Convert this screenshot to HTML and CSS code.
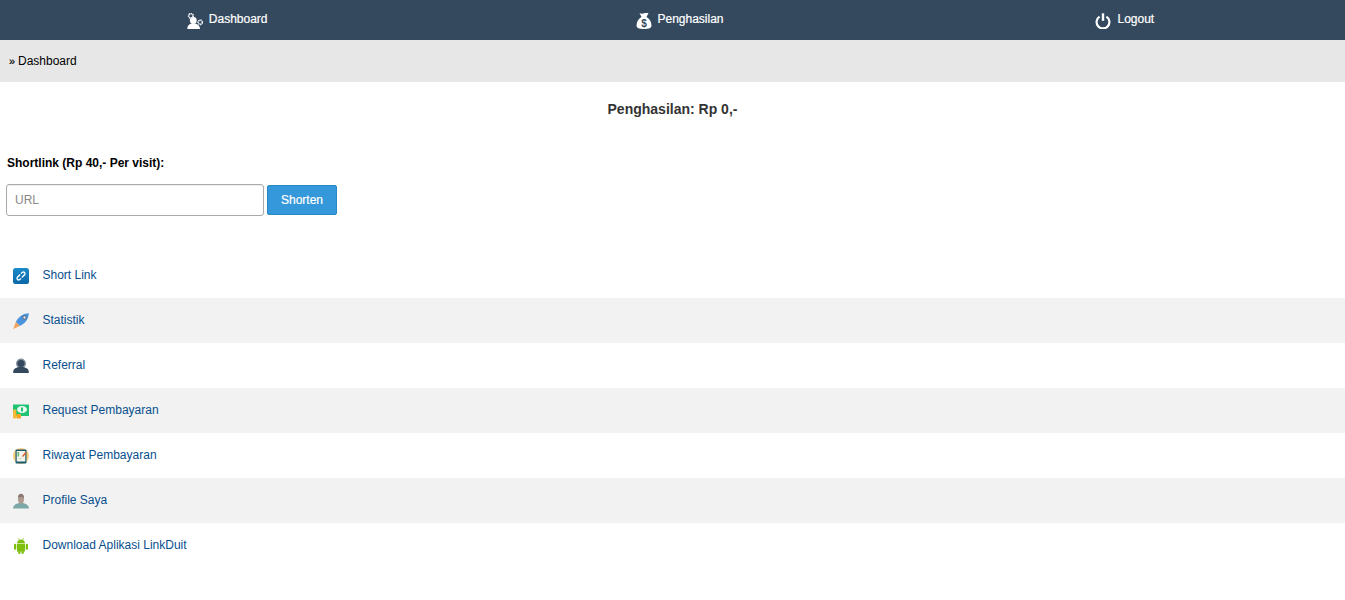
FILE: index.html
```html
<!DOCTYPE html>
<html lang="id">
<head>
<meta charset="utf-8">
<title>Dashboard</title>
<link rel="stylesheet" href="styles.css">
</head>
<body>
<nav class="topnav">
  <a class="topnav-item item-dash" href="#">
    <svg class="nav-icon" viewBox="0 0 16 16"><circle cx="6.300" cy="7.500" r="3.400" fill="#fff"/><path d="M.3 16c0-3.500 2-5.500 6-5.500s6.700 2 6.700 5.500z" fill="#fff"/><circle cx="3.900" cy="2.900" r="2.200" fill="none" stroke="#f0f2f4" stroke-width="1.800" stroke-dasharray="1.300 .5"/><circle cx="13.200" cy="9.300" r="2.100" fill="none" stroke="#f0f2f4" stroke-width="1.700" stroke-dasharray="1.300 .5"/></svg>
    <span>Dashboard</span>
  </a>
  <a class="topnav-item item-money" href="#">
    <svg class="nav-icon" viewBox="0 0 16 16"><path d="M3.500 0c1.200.6 2.800.9 4.500.3 1.700-.6 3.200-.6 4.500-.3L10.500 4c3 1.800 5 5 5 8.500 0 2.500-2.500 3.500-7.500 3.500S.500 15 .500 12.500c0-3.500 2-6.700 5-8.500z" fill="#fff"/><text x="8" y="13.700" class="dollar">$</text></svg>
    <span>Penghasilan</span>
  </a>
  <a class="topnav-item item-logout" href="#">
    <svg class="nav-icon" viewBox="0 0 16 16"><path d="M4.600 3.600a6.400 6.400 0 1 0 6.800 0" fill="none" stroke="#fff" stroke-width="2.200"/><path d="M8 .3v7.500" stroke="#fff" stroke-width="2.400"/></svg>
    <span>Logout</span>
  </a>
</nav>

<div class="crumb"><span class="raquo">»</span><span>Dashboard</span></div>

<h1 class="earnings">Penghasilan: Rp 0,-</h1>

<section class="shortlink">
  <p class="shortlink-label">Shortlink (Rp 40,- Per visit):</p>
  <form class="shortlink-form">
    <input class="url-input" type="text" placeholder="URL">
    <button class="shorten-btn" type="button">Shorten</button>
  </form>
</section>

<ul class="menu">
  <li class="menu-row"><a href="#">
    <svg class="menu-icon" viewBox="0 0 16 16"><defs><linearGradient id="lg" x1="0" y1="0" x2="0" y2="1"><stop offset="0" stop-color="#1b8ccb"/><stop offset="1" stop-color="#0a67a8"/></linearGradient></defs><rect width="16" height="16" rx="2.500" fill="url(#lg)"/><path d="M8 5.500l1.500-1.300a1.700 1.700 0 0 1 2.300 2.300L8.800 9.500" fill="none" stroke="#fff" stroke-width="1.300"/><path d="M8 10.500l-1.500 1.300a1.700 1.700 0 0 1-2.300-2.300L7.200 6.500" fill="none" stroke="#fff" stroke-width="1.300"/></svg>
    Short Link</a></li>
  <li class="menu-row"><a href="#">
    <svg class="menu-icon" viewBox="0 0 16 16"><path d="M15.800.200C11 .200 5.500 3 2.800 9l4 4C13 10 15.800 5 15.800.200z" fill="#4a94de"/><circle cx="11.500" cy="4.500" r="1.700" fill="#dde" stroke="#555" stroke-width=".8"/><path d="M2.800 9l4 4-6.600 3z" fill="#f2a35c"/></svg>
    Statistik</a></li>
  <li class="menu-row"><a href="#">
    <svg class="menu-icon" viewBox="0 0 16 16"><ellipse cx="8" cy="5.500" rx="5" ry="5" fill="#34495e" opacity=".6"/><circle cx="8" cy="5.500" r="3.600" fill="#34495e"/><path d="M.200 14c0-3.500 3-5 7.800-5s7.800 1.500 7.800 5v1H.200z" fill="#34495e"/></svg>
    Referral</a></li>
  <li class="menu-row"><a href="#">
    <svg class="menu-icon" viewBox="0 0 16 16"><rect y="1.500" width="16" height="11.500" fill="#20c374"/><ellipse cx="9" cy="6.500" rx="5" ry="3.500" fill="#e8fbf0"/><rect x="8" y="4.500" width="2" height="4" fill="#20c374"/><rect y="6.500" width="3.300" height="9" rx="1" fill="#f7bc34"/><rect x="3.300" y="11" width="4.700" height="4.500" rx="1" fill="#f5a623"/></svg>
    Request Pembayaran</a></li>
  <li class="menu-row"><a href="#">
    <svg class="menu-icon" viewBox="0 0 16 16"><circle cx="8" cy="8" r="8" fill="#f9cf7f"/><rect x="2.500" y="1.500" width="11" height="14" rx="1" fill="#1c5a6e"/><rect x="3.700" y="3" width="8.600" height="10.500" fill="#f2f3ea"/><rect x="4.500" y="4" width="1.600" height="4.500" fill="#6dbb6d"/><path d="M9.500 8.500L13 4.500" stroke="#e4572e" stroke-width="1.300"/><path d="M6.500 10.500h2" stroke="#b8d0b0"/></svg>
    Riwayat Pembayaran</a></li>
  <li class="menu-row"><a href="#">
    <svg class="menu-icon" viewBox="0 0 16 16"><path d="M0 15.500c.5-4 4-5.500 8-5.500s7.500 1.500 8 5.500z" fill="#7ba7a7"/><ellipse cx="8" cy="6" rx="3" ry="4.700" fill="#b09b90"/><path d="M5 5C4.800 2 6.500.8 8 .8s3.200 1.200 3 4.200C9.500 3.600 6.500 3.600 5 5z" fill="#8b7a71"/></svg>
    Profile Saya</a></li>
  <li class="menu-row"><a href="#">
    <svg class="menu-icon" viewBox="0 0 16 16"><path d="M4 5.200C4 3 6 1.500 8 1.500s4 1.500 4 3.700z" fill="#7fbf10"/><path d="M5.500 .2l1 2M10.500 .2l-1 2" stroke="#7fbf10" stroke-width=".7"/><path d="M4 5.800h8v7.700H4z" fill="#7fbf10"/><rect x="1" y="5.800" width="2.300" height="6" rx="1.100" fill="#7fbf10"/><rect x="12.700" y="5.800" width="2.300" height="6" rx="1.100" fill="#7fbf10"/><rect x="5.200" y="12" width="2.300" height="4" rx="1.100" fill="#7fbf10"/><rect x="8.500" y="12" width="2.300" height="4" rx="1.100" fill="#7fbf10"/></svg>
    Download Aplikasi LinkDuit</a></li>
</ul>
</body>
</html>
```
FILE: styles.css
```css
* { box-sizing: border-box; }
html, body { margin: 0; padding: 0; }
body {
  background: #fff;
  color: #333;
  font-family: Arial, "Liberation Sans", sans-serif;
  font-size: 12px;
  overflow: hidden;
}
.topnav {
  display: grid;
  grid-template-columns: repeat(3, 1fr);
  height: 40px;
  background: #34495e;
}
.topnav-item {
  display: flex;
  align-items: center;
  justify-content: center;
  gap: 6px;
  color: #fff;
  font-size: 12px;
  text-decoration: none;
  padding-bottom: 3px;
  -webkit-text-stroke: .2px #fff;
}
.item-dash { padding-left: 6px; }
.item-money { padding-left: 15px; gap: 5px; }
.item-logout { padding-left: 8px; }
.nav-icon { width: 16px; height: 16px; display: block; margin-top: 4px; }
.dollar { font-size: 10px; font-weight: bold; text-anchor: middle; fill: #34495e; font-family: "Liberation Sans", sans-serif; stroke: none; -webkit-text-stroke: 0; }
.crumb {
  display: flex;
  height: 42px;
  background: #e7e7e7;
  color: #000;
  line-height: 42px;
  padding-left: 9px;
}
.raquo { font-size: 11px; width: 9px; -webkit-text-stroke: .2px #000; }
.earnings {
  margin: 0;
  padding-top: 20px;
  height: 58px;
  line-height: 15px;
  font-size: 14px;
  font-weight: bold;
  text-align: center;
  color: #333;
}
.shortlink { padding: 0 6px; margin-top: 16px; }
.shortlink-label {
  margin: 0 0 0 1px;
  font-size: 12px;
  line-height: 14px;
  font-weight: bold;
  color: #000;
}
.shortlink-form {
  display: flex;
  align-items: center;
  gap: 3px;
  margin-top: 14px;
}
.url-input {
  width: 258px;
  height: 32px;
  padding: 0 8px;
  border: 1px solid #aaa;
  border-radius: 3px;
  font: 12px Arial, "Liberation Sans", sans-serif;
  color: #333;
  box-shadow: inset 0 1px 1px rgba(0,0,0,.08);
}
.url-input::placeholder { color: #888; opacity: 1; }
.shorten-btn {
  width: 70px;
  height: 30px;
  padding: 0;
  background: #3498db;
  border: 1px solid #2a87c5;
  border-radius: 2px;
  color: #fff;
  font: 12px Arial, "Liberation Sans", sans-serif;
  -webkit-text-stroke: .2px #fff;
}
.menu {
  list-style: none;
  margin: 37px 0 0;
  padding: 0;
}
.menu-row { height: 45px; }
.menu-row:nth-child(even) { background: #f2f2f2; }
.menu-row a {
  display: flex;
  align-items: center;
  height: 100%;
  padding-left: 13px;
  color: #084f8e;
  text-decoration: none;
  font-size: 12px;
  padding-bottom: 2px;
}
.menu-icon { width: 16px; height: 16px; margin: 3px 13.5px 0 0; flex: none; }
```
